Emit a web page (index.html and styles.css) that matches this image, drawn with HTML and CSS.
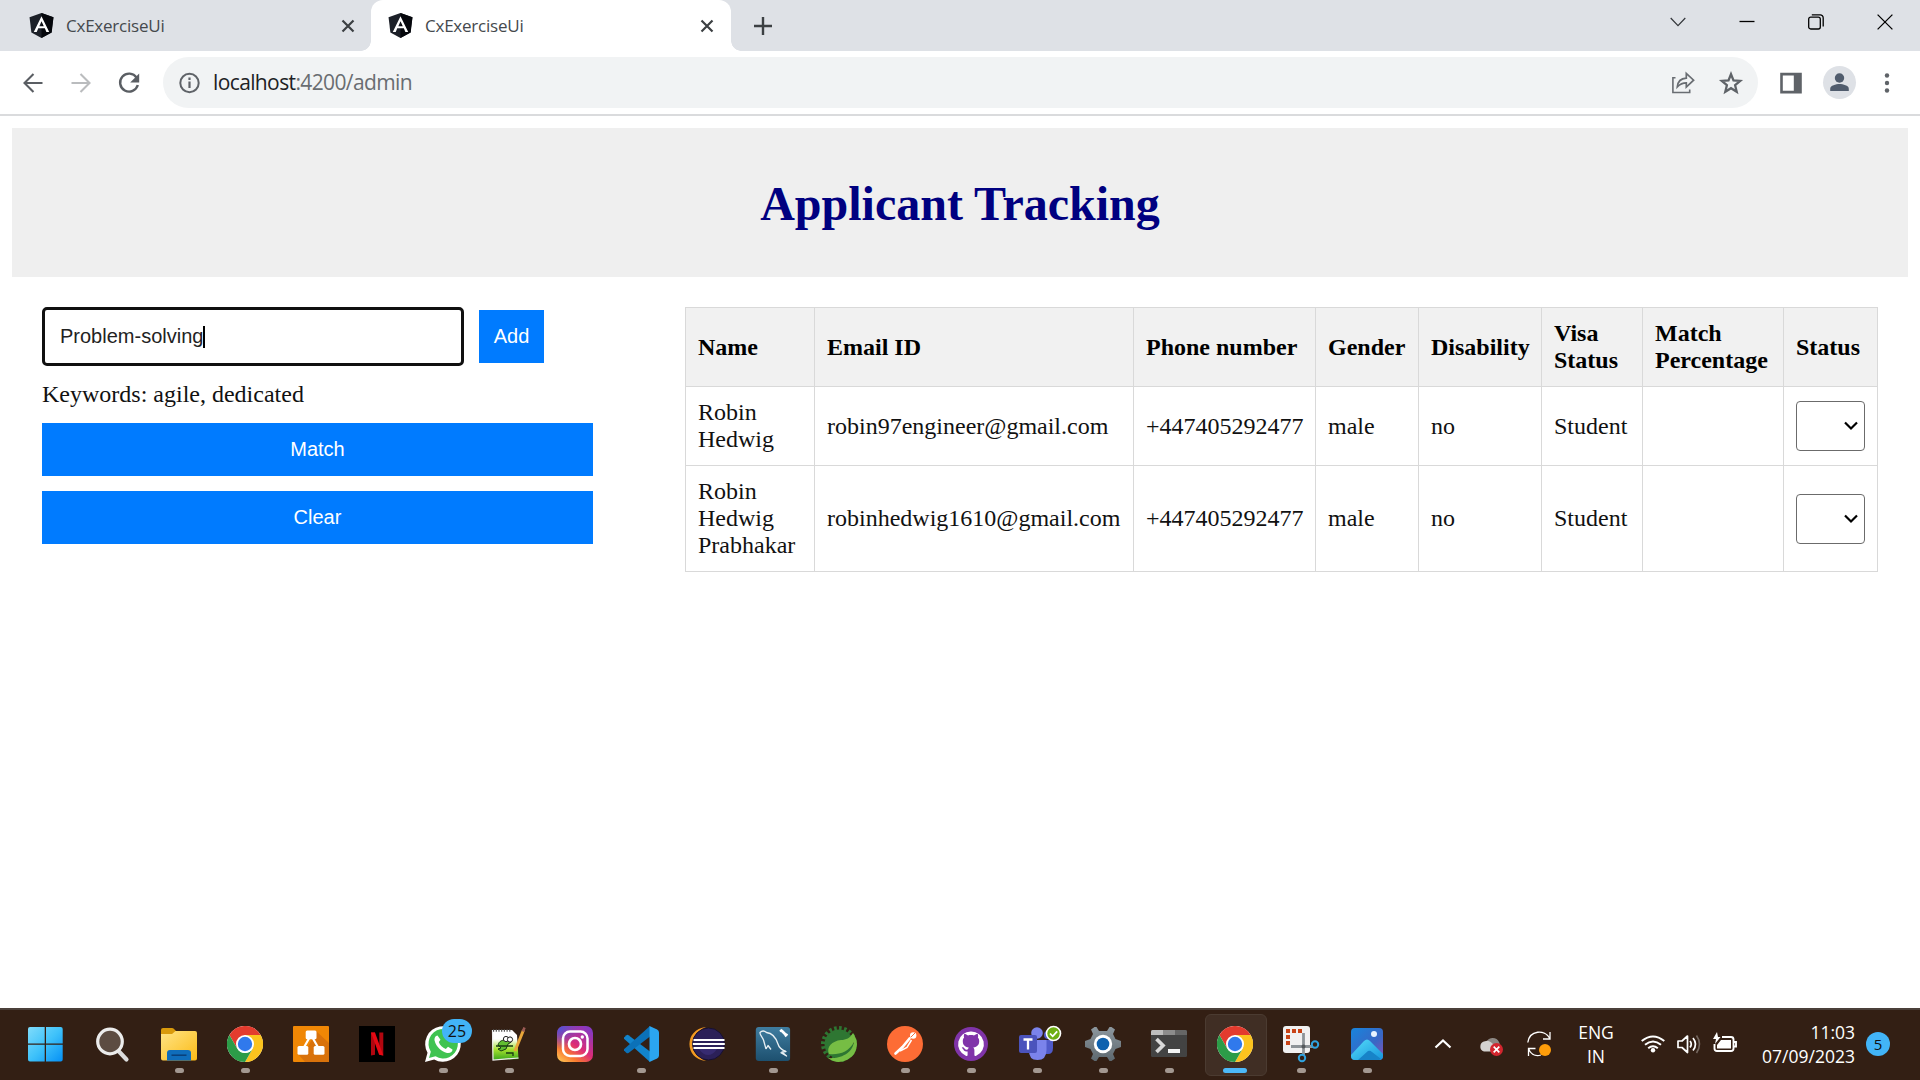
FILE: index.html
```html
<!DOCTYPE html>
<html lang="en">
<head>
<meta charset="utf-8">
<title>CxExerciseUi</title>
<link rel="stylesheet" href="styles.css">
</head>
<body>
<svg class="defs" aria-hidden="true">
  <defs>
    <linearGradient id="win" x1="0" y1="0" x2="1" y2="1"><stop offset="0" stop-color="#80dcfb"/><stop offset=".5" stop-color="#3fc2fa"/><stop offset="1" stop-color="#0590f5"/></linearGradient>
    <linearGradient id="folder" x1="0" y1="0" x2="1" y2="1"><stop offset="0" stop-color="#ffe486"/><stop offset="1" stop-color="#fbbb16"/></linearGradient>
    <linearGradient id="insta" x1="0" y1="1" x2=".75" y2="0"><stop offset="0" stop-color="#ffd25a"/><stop offset=".28" stop-color="#f9792f"/><stop offset=".55" stop-color="#dc2c78"/><stop offset="1" stop-color="#8838c0"/></linearGradient>
    <radialGradient id="instaBlue" cx="0" cy="0" r=".65"><stop offset="0" stop-color="#4058e0"/><stop offset="1" stop-color="#4058e0" stop-opacity="0"/></radialGradient>
    <linearGradient id="note" x1="0" y1="0" x2="0" y2="1"><stop offset=".3" stop-color="#fff"/><stop offset=".65" stop-color="#a5e02e"/><stop offset="1" stop-color="#3aa61c"/></linearGradient>
    <linearGradient id="photo" x1="0" y1="0" x2="1" y2="1"><stop offset="0" stop-color="#1785dd"/><stop offset=".6" stop-color="#3a66c4"/><stop offset="1" stop-color="#8b50b4"/></linearGradient>
    <linearGradient id="hill" x1="0" y1="0" x2="1" y2="1"><stop offset="0" stop-color="#55dcfa"/><stop offset="1" stop-color="#1795dc"/></linearGradient>
    <linearGradient id="gear" x1="0" y1="0" x2="0" y2="1"><stop offset="0" stop-color="#8d979e"/><stop offset="1" stop-color="#5d686f"/></linearGradient>
    <linearGradient id="mysql" x1="0" y1="0" x2="0" y2="1"><stop offset="0" stop-color="#3f7da0"/><stop offset="1" stop-color="#1d506f"/></linearGradient>
    <symbol id="angular" viewBox="0 0 24 24"><path fill="#1c2028" d="M12 0 23.5 4 21.7 18.8 12 24 2.3 18.8.5 4z"/><path fill="#05070c" d="M12 0 23.5 4 21.7 18.8 12 24z"/><path fill="#fff" fill-rule="evenodd" d="M12 3 4.6 18.3h2.8l1.5-3.6h6.3l1.5 3.6h2.7zm0 5 2.2 4.7H9.9z"/></symbol>
    <symbol id="chrome" viewBox="0 0 36 36"><circle cx="18" cy="18" r="18" fill="#fff"/><path fill="#e33b2e" d="M2.4 9A18 18 0 0 1 33.6 9H18l-7.8 13.5z"/><path fill="#fcc31e" d="M33.6 9A18 18 0 0 1 18 36l7.8-13.5L18 9z"/><path fill="#2c9c48" d="M18 36A18 18 0 0 1 2.4 9l7.8 13.5a9 9 0 0 0 15.6 0z"/><circle cx="18" cy="18" r="9" fill="#fff"/><circle cx="18" cy="18" r="7.2" fill="#3079ec"/></symbol>
    <symbol id="x" viewBox="0 0 14 14"><path d="m1.5 1.5 11 11m0-11-11 11" stroke="#3c4043" stroke-width="2.2"/></symbol>
  </defs>
</svg>

<div class="tabs">
  <div class="tab tab-first"><svg class="favicon"><use href="#angular"/></svg><span class="tab-title">CxExerciseUi</span><svg class="tab-close"><use href="#x"/></svg></div>
  <div class="tab tab-active"><svg class="favicon"><use href="#angular"/></svg><span class="tab-title">CxExerciseUi</span><svg class="tab-close"><use href="#x"/></svg></div>
  <svg class="new-tab" viewBox="0 0 18 18"><path d="M9 0v18M0 9h18" stroke="#3c4043" stroke-width="2.4"/></svg>
  <div class="window-controls">
    <svg viewBox="0 0 16 16"><path d="m.7 4 7.3 7.6L15.3 4" fill="none" stroke="#33363a" stroke-width="1.2"/></svg>
    <svg viewBox="0 0 16 16"><path d="M.5 7.5h15" stroke="#000" stroke-width="1.3"/></svg>
    <svg viewBox="0 0 16 16"><rect x=".7" y="3.2" width="11.6" height="11.8" rx="2" fill="none" stroke="#000" stroke-width="1.3"/><path d="M3.8.9h8.4A3 3 0 0 1 15.2 4v8.4" fill="none" stroke="#000" stroke-width="1.3"/></svg>
    <svg viewBox="0 0 16 16"><path d="m.6.6 14.8 14.8m0-14.8L.6 15.4" stroke="#000" stroke-width="1.3"/></svg>
  </div>
</div>

<div class="toolbar">
  <span class="tool"><svg viewBox="0 0 24 24"><path d="M21.5 12H3.5m9-9-9 9 9 9" fill="none" stroke="#5a5e63" stroke-width="2.1"/></svg></span>
  <span class="tool"><svg viewBox="0 0 24 24"><path d="M2.5 12h18m-9-9 9 9-9 9" fill="none" stroke="#babcbe" stroke-width="2.1"/></svg></span>
  <span class="tool"><svg viewBox="0 0 24 24"><path d="M19.6 6.6A9 9 0 1 0 20.8 14" fill="none" stroke="#5a5e63" stroke-width="2.4"/><path fill="#5a5e63" d="M22.2 2.5v9h-9z"/></svg></span>
  <div class="address">
    <svg class="info" viewBox="0 0 24 24"><circle cx="11.5" cy="12" r="9.2" fill="none" stroke="#5f6368" stroke-width="2"/><path d="M11.5 10.5V17M11.5 6.6V9" stroke="#5f6368" stroke-width="2.2"/></svg>
    <span class="url"><b>localhost</b>:4200/admin</span>
    <span class="tool push"><svg viewBox="0 0 24 24"><path d="M4.500 6.800H1.900v14.700h16.800v-3" fill="none" stroke="#696d72" stroke-width="1.600"/><path d="M6.300 15.800C6.800 10.500 9.900 7.400 15.300 7.100V2.400l7.300 6.800-7.300 6.900v-4.300c-4 0-6.300 1.200-9 4z" fill="none" stroke="#696d72" stroke-width="1.700"/></svg></span>
    <span class="tool"><svg viewBox="0 0 24 24"><path d="m12 3.200 2.500 6.200 6.700.500-5.100 4.300 1.600 6.500-5.700-3.500-5.700 3.500 1.600-6.500-5.100-4.300 6.700-.500z" fill="none" stroke="#5f6368" stroke-width="2.300"/></svg></span>
  </div>
  <span class="tool"><svg viewBox="0 0 24 24"><path fill="#5f6368" fill-rule="evenodd" d="M1.200 1.700h21.600v20.800H1.200zm2.600 2.700v15.400h11V4.400z"/></svg></span>
  <span class="tool"><svg class="profile" viewBox="0 0 33 33"><circle cx="16.500" cy="16.500" r="16.500" fill="#dee1e6"/><circle cx="16.500" cy="12" r="4.700" fill="#505c6d"/><path fill="#505c6d" d="M7.200 25v-2.200c0-3.200 5.800-4.700 9.300-4.700s9.300 1.500 9.300 4.700V25z"/></svg></span>
  <span class="tool"><svg viewBox="0 0 24 24" fill="#5f6368"><circle cx="12" cy="4.500" r="2.200"/><circle cx="12" cy="12" r="2.200"/><circle cx="12" cy="19.500" r="2.200"/></svg></span>
</div>

<main class="page">
  <header class="banner"><h1>Applicant Tracking</h1></header>
  <div class="content">
    <section class="filters">
      <div class="entry"><div class="keyword-input">Problem-solving<i class="caret"></i></div><button class="btn add">Add</button></div>
      <p class="keywords">Keywords: agile, dedicated</p>
      <button class="btn wide">Match</button>
      <button class="btn wide">Clear</button>
    </section>
    <table class="applicants">
      <colgroup><col class="c-name"><col class="c-email"><col class="c-phone"><col class="c-gender"><col class="c-dis"><col class="c-visa"><col class="c-match"><col class="c-status"></colgroup>
      <thead><tr class="row-short"><th>Name</th><th>Email ID</th><th>Phone number</th><th>Gender</th><th>Disability</th><th>Visa Status</th><th>Match Percentage</th><th>Status</th></tr></thead>
      <tbody>
        <tr class="row-short"><td>Robin Hedwig</td><td>robin97engineer@gmail.com</td><td>+447405292477</td><td>male</td><td>no</td><td>Student</td><td></td><td><div class="select"><svg viewBox="0 0 14 10"><path d="m1 1.500 6 6 6-6" fill="none" stroke="#000" stroke-width="2.200"/></svg></div></td></tr>
        <tr class="row-tall"><td>Robin Hedwig Prabhakar</td><td>robinhedwig1610@gmail.com</td><td>+447405292477</td><td>male</td><td>no</td><td>Student</td><td></td><td><div class="select"><svg viewBox="0 0 14 10"><path d="m1 1.500 6 6 6-6" fill="none" stroke="#000" stroke-width="2.200"/></svg></div></td></tr>
      </tbody>
    </table>
  </div>
</main>

<footer class="taskbar">
  <div class="apps">
    <span class="app"><svg viewBox="0 0 36 36"><path fill="url(#win)" d="M-1 3q0-2 2-2h14.700v16.500H-1zM17 1h14.700q2 0 2 2v14.500H17zM-1 18.700h16.700V35.500H1q-2 0-2-2zM17 18.700h16.700v14.800q0 2-2 2H17z"/></svg></span>
    <span class="app"><svg viewBox="0 0 36 36"><path d="m23.500 25 8 8.500" stroke="#dcdcdc" stroke-width="4.200" stroke-linecap="round"/><circle cx="15" cy="15.500" r="12.300" fill="#5c4c42" stroke="#ececec" stroke-width="3.200"/></svg></span>
    <span class="app run"><svg viewBox="0 0 36 36"><path fill="#d99a0c" d="M0 4q0-2 2-2h9q1 0 1.800.800L15 5v6H0z"/><path fill="url(#folder)" d="M0 8h11l3.500-3H34q2 0 2 2v25.500q0 2-2 2H2q-2 0-2-2z"/><path fill="#0f6dbb" d="M6 34.500V27q0-3 3-3h18q3 0 3 3v7.500z"/><path d="M10.500 29.200h15" stroke="#0a3f78" stroke-width="1.500"/></svg></span>
    <span class="app run"><svg><use href="#chrome"/></svg></span>
    <span class="app"><svg viewBox="0 0 36 36"><rect width="36" height="36" rx="1" fill="#f08705"/><path fill="#d9720b" d="m23 5 13 12v19H12l-7-8 9-5z"/><path d="m18 9-8 14m8-14 8 14" stroke="#fff" stroke-width="2.200"/><rect x="12.700" y="4.500" width="10.800" height="8.800" rx="1.500" fill="#fff"/><rect x="4.500" y="20" width="10.800" height="8.800" rx="1.500" fill="#fff"/><rect x="20.700" y="20" width="10.800" height="8.800" rx="1.500" fill="#fff"/></svg></span>
    <span class="app"><svg viewBox="0 0 36 36"><path d="M0 0h36v36H0z"/><path fill="#b1060f" d="M12 6.500h4v22.300l-4 .700zM20.300 6.500h4v23l-4-.700z"/><path fill="#e50914" d="M12 6.500h4l8.300 23-4.200-.700z"/></svg></span>
    <span class="app run"><svg viewBox="0 0 36 36"><path fill="#fff" d="m0 36 2.500-9.200A17.800 17.800 0 1 1 9.200 33.500z"/><path fill="#3fc351" d="m4 32 1.800-6.300a14.700 14.700 0 1 1 4.700 4.600z"/><path fill="#fff" d="M12.500 9.500c-2 .3-3.500 2.500-2.800 5.500 1.300 5.500 6.500 10.700 12.300 12 3.500.500 5.500-1.200 5.500-3.500l-4.500-2.700-2.200 2.200c-3.300-1.300-5.700-3.500-7-7l1.700-2.200z"/></svg><em class="count">25</em></span>
    <span class="app run"><svg viewBox="0 0 36 36"><path fill="url(#note)" d="M1 4h20l5 5 1.500 24L2 34z"/><path fill="none" stroke="#eee" stroke-width="1.200" d="m1.500 4 .5 30 25.500-2"/><path d="M2 4.500h19" stroke="#555" stroke-width="2.500" stroke-dasharray="1.200 1.500"/><path fill="#61bd31" stroke="#183b13" d="M7 19c1-4 5-6 9-4l1-3q3-2 4 1 0 4-4 5l-2 5-5 2-3-2 3-1z"/><circle cx="15" cy="13" r="2.600" fill="#fff" stroke="#222"/><circle cx="19" cy="13.500" r="2.600" fill="#fff" stroke="#222"/><path d="M5 20h17m-7 7h7v3" stroke="#183b13" fill="none" stroke-width="1.300"/><path d="M32.500 4 24 25" stroke="#e9a63a" stroke-width="3"/><path d="m33.500 1.500-1.500 4" stroke="#9b5a55" stroke-width="2.500"/></svg></span>
    <span class="app"><svg viewBox="0 0 36 36"><rect width="36" height="36" rx="7" fill="url(#insta)"/><rect width="36" height="36" rx="7" fill="url(#instaBlue)"/><rect x="6" y="5.500" width="24.500" height="24.500" rx="7" fill="none" stroke="#fff" stroke-width="2.500"/><circle cx="18" cy="18" r="6" fill="none" stroke="#fff" stroke-width="2.700"/><circle cx="25.300" cy="11" r="1.700" fill="#fff"/></svg></span>
    <span class="app run"><svg viewBox="0 0 36 36"><path fill="#1284cc" d="m1 11.500 2.500-2.300q1-.700 2 0L27 25.500V36L1 12.800z"/><path fill="#0b71b8" d="M1 24.500 3.500 27q1 .600 2 0L27 10.500V0L1 23.300z"/><path fill="#2ba5f0" d="m26.500 0 7.600 3.600q1.900.900 1.900 3v22.800q0 2.100-1.900 3L26.500 36z"/></svg></span>
    <span class="app"><svg viewBox="0 0 36 36"><path fill="#f39a22" d="M17 1C-5 3-5 33 17 35 3 30 3 6 17 1z"/><circle cx="19.500" cy="18" r="16" fill="#2b2058" stroke="#17102f"/><path fill="#44358a" opacity=".5" d="M10 23h18q-4 6-9 6t-9-6z"/><path d="M4.500 14h31M3.800 18h32M4.500 22h31" stroke="#fff" stroke-width="1.800"/></svg></span>
    <span class="app run"><svg viewBox="0 0 36 36"><rect x=".8" y="1" width="34.300" height="34" rx="3" fill="url(#mysql)"/><path fill="none" stroke="#e8f0f4" stroke-width="1.300" stroke-linejoin="round" d="M11 23 8.500 14C7 10.500 4.500 8.500 5 6.500Q8 3.500 11.500 6.500C17 7 21 12 23 18c1 4 3 5.500 8 7.500l-4 .5 4.500 4-6-3.500M11 23l2-3.500 3 4"/><path d="m26.500 4.500 5 5" stroke="#fff" stroke-width="2.700"/><path d="m25 5.500 2-2m3 7 2.500-2.500" stroke="#fff" stroke-width="2"/></svg></span>
    <span class="app"><svg viewBox="0 0 36 36"><circle cx="18" cy="18" r="14.500" fill="#2e7632"/><circle cx="18" cy="18" r="16" fill="none" stroke="#2e7632" stroke-width="4" stroke-dasharray="2.600 2.400"/><path fill="#76bd44" d="M32 7c2 3 4 7 4 11a18 18 0 0 1-29 14c10 1 24-3 26-16-5 10-15 13-25 12-3-7 3-13 12-14 5 0 9-2 12-7z"/></svg></span>
    <span class="app run"><svg viewBox="0 0 36 36"><circle cx="18" cy="18" r="18" fill="#fd6c35"/><circle cx="26.200" cy="9.500" r="3.200" fill="#fff"/><path d="m22.500 12.500-7 8.500-7 6.500" stroke="#fff" stroke-width="2.600" fill="none" stroke-linecap="round"/><path d="m24.500 14-4.500 7.500-7 3.500" stroke="#fff" stroke-width="1.500" fill="none"/><path d="m24 11 4-4" stroke="#fd6c35"/></svg></span>
    <span class="app run"><svg viewBox="0 0 36 36"><circle cx="18" cy="18" r="17" fill="#8034a9"/><path fill="#fff" d="M18 5.500a12.600 12.600 0 0 0-5.200 24.200c1.200.500 1.800.100 1.800-.700v-3.500c-3 .500-3.800-1-4.500-2.500-.5-1-1.800-1-1-1.600 2-.900 2.500 2 4 2.300.9.100 1.700-.100 2-.700 0-.600.400-1 .7-1.400-4.500-.6-6-3-6-6.500 0-1.400.5-2.500 1.300-3.500-.4-1.200-.3-2.600.2-3.700 1.500 0 2.700.7 3.700 1.500 2-.5 4-.5 6 0 1-.8 2.200-1.500 3.700-1.500.5 1.100.6 2.500.2 3.700.8 1 1.300 2.100 1.300 3.500 0 3.500-1.500 5.900-6 6.500.7.600 1.200 1.600 1.200 2.700v4.700c0 .8.600 1.200 1.800.7A12.600 12.600 0 0 0 18 5.500z"/></svg></span>
    <span class="app run"><svg viewBox="0 0 36 36"><circle cx="18" cy="7" r="5.800" fill="#7b83eb"/><circle cx="29" cy="9" r="4" fill="#505ac9"/><path fill="#505ac9" d="M25 14h9v8q0 6-5 6h-5z"/><path fill="#7b83eb" d="M10 14h17.500v10q0 10-9 10T10 24z"/><rect x="0" y="9" width="18" height="18" rx="2" fill="#4b53bc"/><path d="M4.500 13.500h9M9 13.500v10" stroke="#fff" stroke-width="2.300"/><circle cx="34.500" cy="7.500" r="7.800" fill="#fff"/><circle cx="34.500" cy="7.500" r="6.200" fill="#6eae12"/><path d="m31 7.500 2.700 2.800 4.500-5" fill="none" stroke="#fff" stroke-width="1.800"/></svg></span>
    <span class="app run"><svg viewBox="0 0 36 36"><path fill="url(#gear)" d="m14 5-2.500-4h-2L6 3.500 8 8l-2.500 5L0 15v6l5.500 2L8 28l-2 4.500L9.500 35h2L14 31h8l2.500 4h2l3.500-2.500-2-4.500 2.500-5 5.500-2v-6l-5.500-2L28 8l2-4.500L26.500 1h-2L22 5z"/><circle cx="18" cy="18" r="9.200" fill="#fff"/><circle cx="18" cy="18" r="6.300" fill="#0f61ae"/></svg></span>
    <span class="app run"><svg viewBox="0 0 36 36"><rect y="4" width="36" height="27" rx="1.500" fill="#434343"/><path fill="#bdbdbd" d="M0 9V5.500Q0 4 1.500 4H12v5z"/><path fill="#8c8c8c" d="M12 4h12v5H12z"/><path fill="#666" d="M24 4h10.500Q36 4 36 5.500V9H24z"/><path d="m5.500 13 6.500 6.500L5.500 26" fill="none" stroke="#d9d9d9" stroke-width="3.700"/><path d="M17 25h12" stroke="#f4f4f4" stroke-width="4"/></svg></span>
    <span class="app run active"><svg><use href="#chrome"/></svg></span>
    <span class="app run"><svg viewBox="0 0 36 36"><rect x="0" y="0" width="27" height="27" rx="3" fill="#f1f1f1"/><path d="M3 5h4m2 0h4m2 0h4M5 9v4m0 2v4" stroke="#c94417" stroke-width="4"/><path d="M20.500 7v22M8 20.500h22" stroke="#8e9498" stroke-width="2.800"/><circle cx="20.500" cy="20.500" r="2" fill="#55595c"/><circle cx="32" cy="18.500" r="3.200" fill="none" stroke="#2fa3e0" stroke-width="2"/><circle cx="19" cy="32" r="3.200" fill="none" stroke="#2fa3e0" stroke-width="2"/></svg></span>
    <span class="app run"><svg viewBox="0 0 36 36"><rect x="2" y="2" width="32" height="32" rx="4" fill="url(#photo)"/><path fill="url(#hill)" d="m2 29 13-14q3-3 6 0l13 13v2q0 4-4 4H6q-4 0-4-4z"/><path fill="#1783c8" d="m9 34 10-9q2-1 4 1l9 7-2 1z"/><circle cx="25" cy="8" r="3" fill="#e8f3ff"/></svg></span>
  </div>
  <div class="tray">
    <span class="tray-wide"><svg viewBox="0 0 24 24"><path d="m4.500 15.500 7.500-7 7.500 7" fill="none" stroke="#fff" stroke-width="2.200"/></svg></span>
    <span class="tray-wide"><svg viewBox="0 0 24 24"><path fill="#8d8884" d="M7 11a7 7 0 0 1 13-1q2 3 1 7L9 18z"/><path fill="#d3d1cf" d="M5 19.500a5.300 5.300 0 0 1 1-10.300q3-1.500 6 1l7 6.300-3 3z"/><circle cx="17.500" cy="17.500" r="6.500" fill="#d3262e"/><path d="m14.700 14.700 5.600 5.600m0-5.600-5.600 5.600" stroke="#fff" stroke-width="1.700"/></svg></span>
    <span class="tray-wide"><svg viewBox="0 0 24 24"><path d="M.8 10.500C2.500-2 18-3 22.800 6.500M23 0v7h-7M14 23C7 25 3 21 1.500 16.500M1.500 24v-7.500h7" fill="none" stroke="#fff" stroke-width="1.300"/><circle cx="18" cy="18" r="6" fill="#ff9d0a"/></svg></span>
    <span class="lang">ENG<br>IN</span>
    <span class="tray-slim"><svg viewBox="0 0 24 24"><path d="M.7 9q11.300-9 22.600 0M4 12.700q8-6.500 16 0M7.200 16.300q4.800-4 9.600 0" fill="none" stroke="#fff" stroke-width="2"/><circle cx="12" cy="18.300" r="2.200" fill="#fff"/></svg></span>
    <span class="tray-slim"><svg viewBox="0 0 24 24"><path d="M1 9v6.500h4l5.500 5V4L5 9z" fill="none" stroke="#fff" stroke-width="1.700" stroke-linejoin="round"/><path d="M13 9q2.500 3.200 0 6.500M16 6q5 6.200 0 12.500" fill="none" stroke="#fff" stroke-width="1.700"/><path d="M19.500 3.500q6 8.700 0 17.500" fill="none" stroke="#74675f" stroke-width="1.600"/></svg></span>
    <span class="tray-slim"><svg viewBox="0 0 24 24"><path d="M9 5h9q2.500 0 2.500 2.500v9Q20.500 19 18 19H4q-2.500 0-2.500-2.500V12M21 10h2v4.500h-2" fill="none" stroke="#fff" stroke-width="1.900"/><path fill="#fff" d="M8 8h10v8.500H4V13zM4 0 0 7h3l-1 5 5.500-7H5z"/></svg></span>
    <span class="clock">11:03<br>07/09/2023</span>
    <span class="notice">5</span>
  </div>
</footer>
</body>
</html>
```
FILE: styles.css
```css
* { box-sizing: border-box; }
body {
  margin: 0;
  width: 1920px;
  height: 1080px;
  overflow: hidden;
  display: flex;
  flex-direction: column;
  background: #fff;
  color: #111;
  font-family: "Liberation Serif", serif;
}
svg { display: block; overflow: visible; flex: none; }
.defs { position: absolute; width: 0; height: 0; }

/* Browser tab strip */
.tabs { height: 51px; flex: none; display: flex; align-items: center; background: #dee1e6; font-family: "Open Sans", sans-serif; }
.tab { height: 51px; display: flex; align-items: center; position: relative; }
.tab-first { width: 371px; padding: 0 16px 0 29px; }
.tab-active { width: 360px; padding: 0 17px; background: #fff; border-radius: 12px 12px 0 0; }
.tab-active::before, .tab-active::after { content: ""; position: absolute; bottom: 0; width: 10px; height: 10px; }
.tab-active::before { left: -10px; background: radial-gradient(circle at 0 0, transparent 9.500px, #fff 10px); }
.tab-active::after { right: -10px; background: radial-gradient(circle at 100% 0, transparent 9.500px, #fff 10px); }
.favicon { width: 25px; height: 25px; }
.tab-title { margin-left: 12px; font-size: 17px; letter-spacing: -0.230px; color: #45494d; }
.tab-close { width: 14px; height: 14px; margin-left: auto; }
.new-tab { width: 18px; height: 18px; margin-left: 23px; }
.window-controls { margin-left: auto; display: flex; gap: 53px; padding: 0 27px 8px 0; }
.window-controls svg { width: 16px; height: 16px; }

/* Browser toolbar */
.toolbar { height: 65px; flex: none; display: flex; align-items: center; padding: 0 9px; border-bottom: 2px solid #dadbdd; }
.tool { width: 48px; height: 48px; display: flex; align-items: center; justify-content: center; }
.tool svg { width: 24px; height: 24px; }
.tool .profile { width: 33px; height: 33px; }
.address { width: 1595px; height: 51px; margin: 0 9px 0 10px; padding: 0 3px 0 15px; display: flex; align-items: center; border-radius: 26px; background: #f1f3f4; }
.info { width: 24px; height: 24px; }
.url { margin: -1px 0 0 11px; font: 21px "Open Sans", sans-serif; letter-spacing: -0.620px; color: #696d71; white-space: nowrap; }
.url b { font-weight: 400; color: #202124; }
.push { margin-left: auto; }

/* Application page */
.page { flex: 1; padding: 12px 12px 0; }
.banner { height: 149px; display: flex; align-items: center; justify-content: center; background: #efefef; }
h1 { margin: 2px 0 0; font-size: 48px; line-height: 56px; color: #000080; }
.content { display: flex; justify-content: space-between; align-items: flex-start; padding: 30px 30px 0; }
.filters { width: 551px; display: flex; flex-direction: column; }
.entry { display: flex; align-items: center; gap: 15px; height: 59px; }
.keyword-input { width: 422px; height: 59px; display: flex; align-items: center; padding: 0 0 0 15px; border: 3px solid #101010; border-radius: 5px; font: 20px "Liberation Sans", sans-serif; color: #222; }
.caret { width: 2px; height: 22px; background: #000; }
.btn { height: 53px; border: 0; padding: 0; background: #007bff; color: #fff; font: 20px "Liberation Sans", sans-serif; }
.add { width: 65px; }
.keywords { margin: 14px 0 15px; font-size: 24px; line-height: 28px; }
.wide { width: 551px; }
.wide + .wide { margin-top: 15px; }

.applicants { width: 1193px; table-layout: fixed; border-collapse: collapse; font-size: 24px; line-height: 27px; }
.applicants th, .applicants td { padding: 0 0 0 12px; border: 1px solid #d9d9d9; text-align: left; vertical-align: middle; }
.applicants th { background: #f1f1f1; color: #000; }
.row-short { height: 79px; }
.row-tall { height: 106px; }
.c-name { width: 129px; }
.c-email { width: 319px; }
.c-phone { width: 182px; }
.c-gender { width: 103px; }
.c-dis { width: 123px; }
.c-visa { width: 101px; }
.c-match { width: 141px; }
.c-status { width: 94px; }
.select { width: 69px; height: 50px; display: flex; align-items: center; justify-content: flex-end; padding-right: 6px; border: 1px solid #6b6b6b; border-radius: 4px; }
.select svg { width: 14px; height: 10px; }

/* Desktop taskbar */
.taskbar { height: 72px; flex: none; display: flex; justify-content: space-between; padding: 0 30px 0 14px; border-top: 2px solid #4b403a; background: #331f14; color: #fff; font: 17.500px/24px "Open Sans", sans-serif; }
.apps, .tray { display: flex; align-items: center; }
.app { width: 66px; height: 70px; padding-top: 16px; display: flex; justify-content: center; position: relative; }
.app svg { width: 36px; height: 36px; position: relative; }
.run::after { content: ""; position: absolute; left: 28.500px; bottom: 7px; width: 9px; height: 5px; border-radius: 3px; background: #a39891; }
.active::before { content: ""; position: absolute; left: 3px; top: 4px; width: 60px; height: 60px; border: 1px solid #4b3b31; border-radius: 6px; background: #402e24; }
.active::after { left: 21px; width: 24px; background: #4cb9f8; }
.count { position: absolute; left: 32px; top: 9px; width: 30px; height: 24px; border-radius: 12px; background: #42b4f7; color: #111; font: 16px/24px "Open Sans", sans-serif; text-align: center; }
.tray { padding-bottom: 2px; }
.tray svg { width: 24px; height: 24px; }
.tray-wide { width: 48px; display: flex; justify-content: center; }
.tray-slim { width: 36px; display: flex; justify-content: center; }
.lang { width: 66px; margin-right: 6px; text-align: center; }
.clock { width: 112px; text-align: right; white-space: nowrap; }
.notice { width: 24px; height: 24px; margin-left: 11px; border-radius: 12px; background: #42b4f7; color: #111; font-size: 15px; text-align: center; }
```
